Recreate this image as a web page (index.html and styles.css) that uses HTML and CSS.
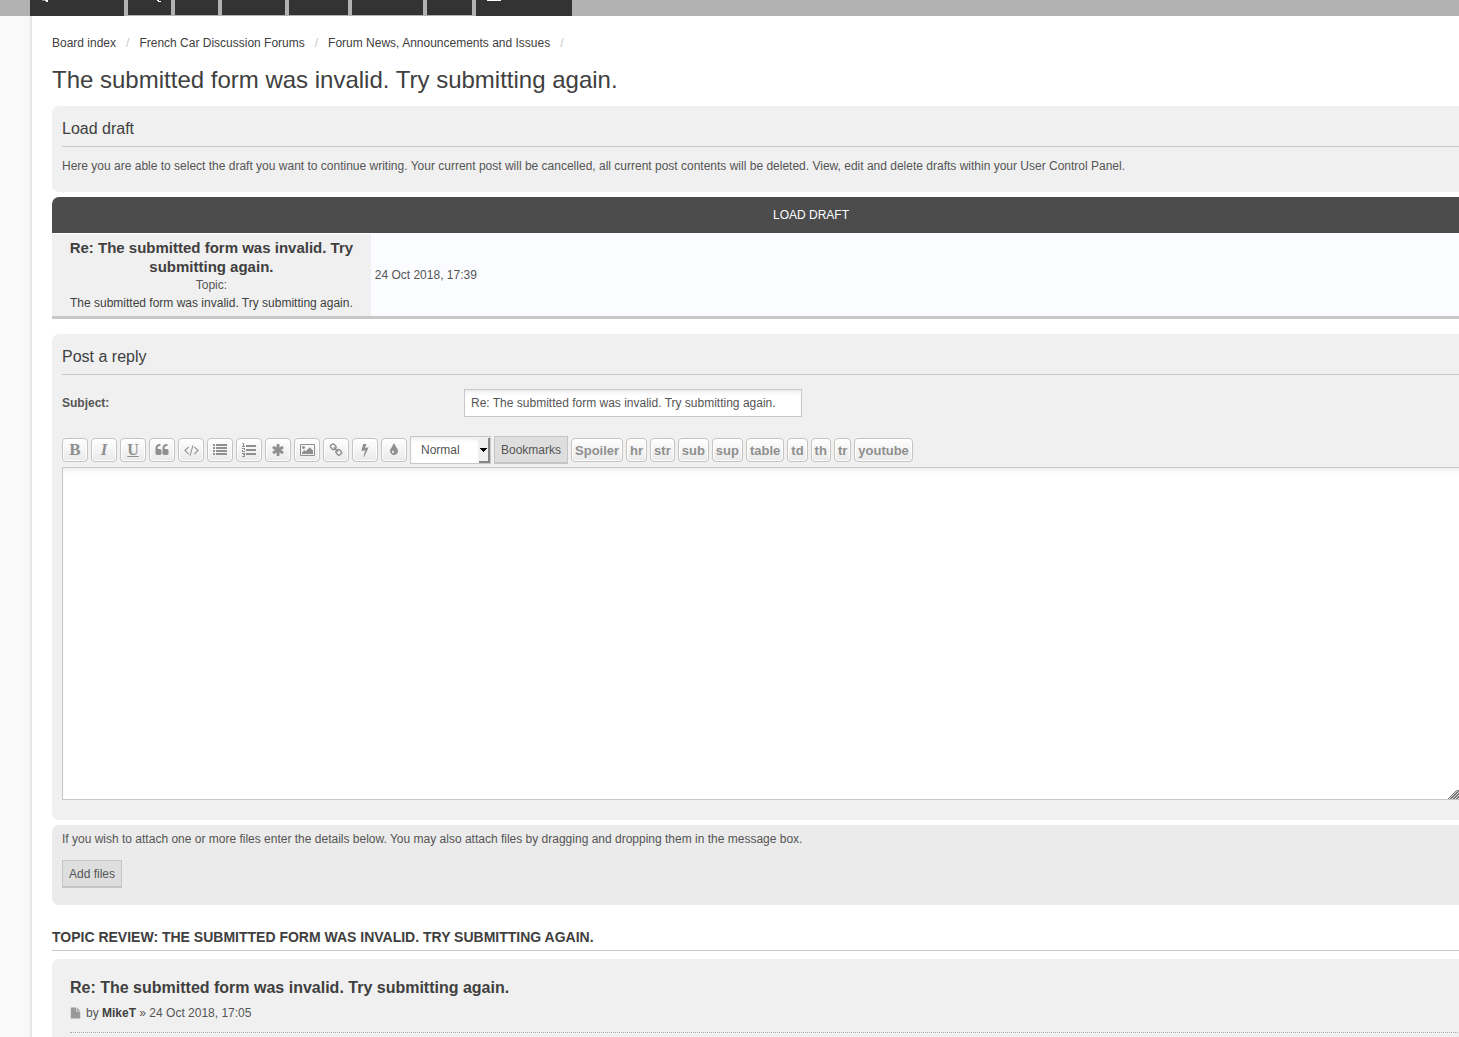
FILE: index.html
```html
<!DOCTYPE html>
<html lang="en">
<head>
  <meta charset="UTF-8">
  <title>Post a reply</title>
  <link rel="stylesheet" href="styles.css">
</head>
<body>
  <!-- Top navigation -->
  <nav class="navbar">
    <ul class="tabs">
      <li class="tab-full"><svg width="8" height="2" viewBox="0 0 8 2"><path fill="#7d8b99" d="M1 0h3v1H1z"/><path d="M4 0h3v2H5V1H4z"/></svg></li>
      <li><svg class="icon-search" width="4" height="2" viewBox="0 0 4 2"><path d="M0 0h2v1H0zM1 1h3v1H1z"/></svg></li>
      <li></li>
      <li></li>
      <li></li>
      <li></li>
      <li></li>
      <li class="tab-full"><svg width="14" height="1" viewBox="0 0 14 1"><path d="M0 0h14v1H0z"/></svg></li>
    </ul>
  </nav>

  <div class="wrap">
    <ul class="breadcrumbs">
      <li><a href="#">Board index</a></li>
      <li><a href="#">French Car Discussion Forums</a></li>
      <li><a href="#">Forum News, Announcements and Issues</a></li>
    </ul>

    <h2 class="topic-title"><a href="#">The submitted form was invalid. Try submitting again.</a></h2>

    <!-- Drafts -->
    <section class="panel panel-draft">
      <h3>Load draft</h3>
      <p>Here you are able to select the draft you want to continue writing. Your current post will be cancelled, all current post contents will be deleted. View, edit and delete drafts within your User Control Panel.</p>
    </section>

    <table class="drafts">
      <colgroup>
        <col class="col-topic">
        <col>
      </colgroup>
      <thead>
        <tr><th colspan="2">Load draft</th></tr>
      </thead>
      <tbody>
        <tr>
          <td class="draft-topic">
            <a class="draft-title" href="#">Re: The submitted form was invalid. Try submitting again.</a>
            <span>Topic:</span>
            <a href="#">The submitted form was invalid. Try submitting again.</a>
          </td>
          <td class="draft-date">24 Oct 2018, 17:39</td>
        </tr>
      </tbody>
    </table>

    <!-- Editor -->
    <form>
      <section class="panel panel-post">
        <h3>Post a reply</h3>
        <div class="field">
          <label for="subject">Subject:</label>
          <input type="text" id="subject" class="inputbox" value="Re: The submitted form was invalid. Try submitting again.">
        </div>

        <div class="format-buttons">
          <button type="button" class="bb bb-icon bb-letter">B</button>
          <button type="button" class="bb bb-icon bb-letter bb-italic">I</button>
          <button type="button" class="bb bb-icon bb-letter bb-underline">U</button>
          <button type="button" class="bb bb-icon" aria-label="Quote"><svg width="14" height="14" viewBox="0 0 1792 1792"><path d="M832 960v384q0 80-56 136t-136 56h-384q-80 0-136-56t-56-136v-704q0-104 40.5-198.5t109.5-163.5 163.5-109.5 198.5-40.5h64q26 0 45 19t19 45v128q0 26-19 45t-45 19h-64q-106 0-181 75t-75 181v32q0 40 28 68t68 28h224q80 0 136 56t56 136zm896 0v384q0 80-56 136t-136 56h-384q-80 0-136-56t-56-136v-704q0-104 40.5-198.5t109.5-163.5 163.5-109.5 198.5-40.5h64q26 0 45 19t19 45v128q0 26-19 45t-45 19h-64q-106 0-181 75t-75 181v32q0 40 28 68t68 28h224q80 0 136 56t56 136z"/></svg></button>
          <button type="button" class="bb bb-icon" aria-label="Code"><svg width="15" height="14" viewBox="-64 0 1920 1792"><path d="M553 1399l-50 50q-10 10-23 10t-23-10l-466-466q-10-10-10-23t10-23l466-466q10-10 23-10t23 10l50 50q10 10 10 23t-10 23l-393 393 393 393q10 10 10 23t-10 23zm591-1067l-373 1291q-4 13-15.5 19.5t-23.5 2.5l-62-17q-13-4-19.5-15.5t-2.5-24.5l373-1291q4-13 15.5-19.5t23.5-2.5l62 17q13 4 19.5 15.5t2.5 24.5zm657 651l-466 466q-10 10-23 10t-23-10l-50-50q-10-10-10-23t10-23l393-393-393-393q-10-10-10-23t10-23l50-50q10-10 23-10t23 10l466 466q10 10 10 23t-10 23z"/></svg></button>
          <button type="button" class="bb bb-icon" aria-label="List"><svg width="14" height="14" viewBox="0 0 14 14"><path d="M0 1h2v2H0zM3 1h11v2H3zM0 4h2v2H0zM3 4h11v2H3zM0 7h2v2H0zM3 7h11v2H3zM0 10h2v2H0zM3 10h11v2H3z"/></svg></button>
          <button type="button" class="bb bb-icon" aria-label="Ordered list"><svg width="14" height="14" viewBox="0 0 14 14"><path d="M4 2h10v2H4zM4 6h10v2H4zM4 10h10v2H4zM1 0h1v3h1v1H0V3h1V1H0zM0 5h3v2H1v1h2v1H0V7h2V6H0zM0 10h3v4H0v-1h2v-1H1v-1H0z"/></svg></button>
          <button type="button" class="bb bb-icon" aria-label="List item"><svg width="14" height="14" viewBox="0 0 1792 1792"><path d="M1546 1050q46 26 59.5 77.5t-12.5 97.5l-64 110q-26 46-77.5 59.5t-97.5-12.5l-266-153v307q0 52-38 90t-90 38h-128q-52 0-90-38t-38-90v-307l-266 153q-46 26-97.5 12.5t-77.5-59.5l-64-110q-26-46-12.5-97.5t59.5-77.5l266-154-266-154q-46-26-59.5-77.5t12.5-97.5l64-110q26-46 77.5-59.5t97.5 12.5l266 153v-307q0-52 38-90t90-38h128q52 0 90 38t38 90v307l266-153q46-26 97.5-12.5t77.5 59.5l64 110q26 46 12.5 97.5t-59.5 77.5l-266 154z"/></svg></button>
          <button type="button" class="bb bb-icon" aria-label="Image"><svg width="15" height="14" viewBox="-64 0 1920 1792"><path d="M576 576q0 80-56 136t-136 56-136-56-56-136 56-136 136-56 136 56 56 136zm1024 384v448h-1408v-192l320-320 160 160 512-512zm96-704h-1600q-13 0-22.5 9.5t-9.5 22.5v1216q0 13 9.5 22.5t22.5 9.5h1600q13 0 22.5-9.5t9.5-22.5v-1216q0-13-9.5-22.5t-22.5-9.5zm160 32v1216q0 66-47 113t-113 47h-1600q-66 0-113-47t-47-113v-1216q0-66 47-113t113-47h1600q66 0 113 47t47 113z"/></svg></button>
          <button type="button" class="bb bb-icon" aria-label="Link"><svg width="14" height="14" viewBox="0 0 1792 1792"><path d="M1520 1216q0-40-28-68l-208-208q-28-28-68-28-42 0-72 32 3 3 19 18.5t21.5 21.5 15 19 13 25.5 3.5 27.5q0 40-28 68t-68 28q-15 0-27.5-3.5t-25.5-13-19-15-21.5-21.5-18.5-19q-33 31-33 73 0 40 28 68l206 207q27 27 68 27 40 0 68-26l147-146q28-28 28-67zm-703-705q0-40-28-68l-206-207q-28-28-68-28-39 0-68 27l-147 146q-28 28-28 67 0 40 28 68l208 208q27 27 68 27 42 0 72-31-3-3-19-18.5t-21.5-21.5-15-19-13-25.5-3.5-27.5q0-40 28-68t68-28q15 0 27.5 3.5t25.5 13 19 15 21.5 21.5 18.5 19q33-31 33-73zm895 705q0 120-85 203l-147 146q-83 83-203 83-121 0-204-85l-206-207q-83-83-83-203 0-123 88-209l-88-88q-86 88-208 88-120 0-204-84l-208-208q-84-84-84-204t85-203l147-146q83-83 203-83 121 0 204 85l206 207q83 83 83 203 0 123-88 209l88 88q86-88 208-88 120 0 204 84l208 208q84 84 84 204z"/></svg></button>
          <button type="button" class="bb bb-icon" aria-label="Flash"><svg width="14" height="14" viewBox="0 0 1792 1792"><path d="M1333 566q18 20 7 44l-540 1157q-13 25-42 25-4 0-14-2-17-5-25.5-19t-4.5-30l197-808-406 101q-4 1-12 1-18 0-31-11-18-15-13-39l201-825q4-14 16-23t28-9h328q19 0 32 12.5t13 29.5q0 8-5 18l-171 463 396-98q8-2 12-2 19 0 34 15z"/></svg></button>
          <button type="button" class="bb bb-icon" aria-label="Font colour"><svg width="14" height="14" viewBox="0 0 1792 1792"><path d="M896 1152q0-36-20-69-1-1-15.5-22.5t-25.5-38-25-44-21-50.5q-4-16-21-16t-21 16q-7 23-21 50.5t-25 44-25.5 38-15.5 22.5q-20 33-20 69 0 53 37.5 90.5t90.5 37.5 90.5-37.5 37.5-90.5zm512-128q0 212-150 362t-362 150-362-150-150-362q0-145 81-275 6-9 62.5-90.5t101-151 99.5-178 83-201.5q9-30 34-47t51-17 51.5 17 33.5 47q28 93 83 201.5t99.5 178 101 151 62.5 90.5q81 127 81 275z"/></svg></button>
          <span class="font-size">
            <select aria-label="Font size"><option>Normal</option></select>
            <svg class="select-arrow" width="12" height="26" viewBox="0 0 12 26"><path fill="#efefef" d="M0 1h12v24H0z"/><path fill="#868686" d="M10 1h2v25H1v-2h9z"/><path fill="#000" d="M2 11h7v1H8v1H7v1H6v1H5v-1H4v-1H3v-1H2z"/></svg>
          </span>
          <button type="button" class="button">Bookmarks</button>
          <button type="button" class="bb">Spoiler</button>
          <button type="button" class="bb">hr</button>
          <button type="button" class="bb">str</button>
          <button type="button" class="bb">sub</button>
          <button type="button" class="bb">sup</button>
          <button type="button" class="bb">table</button>
          <button type="button" class="bb">td</button>
          <button type="button" class="bb">th</button>
          <button type="button" class="bb">tr</button>
          <button type="button" class="bb">youtube</button>
        </div>
        <textarea class="message" rows="15" aria-label="Message"></textarea>
      </section>

      <section class="panel panel-attach">
        <p>If you wish to attach one or more files enter the details below. You may also attach files by dragging and dropping them in the message box.</p>
        <button type="button" class="button">Add files</button>
      </section>
    </form>

    <!-- Topic review -->
    <h3 class="review-title">Topic review: The submitted form was invalid. Try submitting again.</h3>
    <article class="post">
      <h3><a href="#">Re: The submitted form was invalid. Try submitting again.</a></h3>
      <p class="author">
        <svg width="11" height="12" viewBox="0 0 1792 1792"><path d="M1152 512v-472q22 14 36 28l408 408q14 14 28 36h-472zm-128 32q0 40 28 68t68 28h544v1056q0 40-28 68t-68 28h-1344q-40 0-68-28t-28-68v-1600q0-40 28-68t68-28h800v544z"/></svg>
        <span>by <a href="#"><strong>MikeT</strong></a> » 24 Oct 2018, 17:05</span>
      </p>
      <div class="content"></div>
    </article>
  </div>
</body>
</html>
```
FILE: styles.css
```css
:root {
  --text: #555;
  --dark: #404040;
  --panel: #f0f0f0;
  --line: #c8c8c8;
  --icon: #8f8f8f;
}
* { box-sizing: border-box; }
html { overflow-x: hidden; }
body {
  margin: 0;
  overflow-x: hidden;
  background: #f9f9f9;
  color: var(--text);
  font-family: Arial, "Liberation Sans", sans-serif;
  font-size: 12px;
  line-height: 18px;
}
h2, h3, p, ul { margin: 0; padding: 0; font-weight: normal; }
ul { list-style: none; }
a { color: var(--dark); text-decoration: none; }
a:hover { text-decoration: underline; }
button, input, select, textarea { font-family: inherit; font-size: 12px; color: var(--text); }
svg { display: block; }

/* Navigation */
.navbar { background: #b2b2b2; padding-left: 30px; }
.tabs {
  display: grid;
  grid-template-columns: 94px 43px 43px 63px 59px 71px 45px 96px;
  gap: 4px;
  height: 16px;
}
.tabs li { background: #333; margin-bottom: 1px; padding-left: 11px; }
.tabs .tab-full { margin-bottom: 0; }
.tabs svg { fill: #fff; }
.tabs .icon-search { margin-left: 18px; }

/* Page, wider than the window */
.wrap {
  margin: 0 -133px 0 30px;
  padding: 18px 20px 0;
  background: #fff;
  border: solid #e6e6e6;
  border-width: 0 2px;
}
.breadcrumbs { display: flex; }
.breadcrumbs li::after { content: "/"; color: #c8c8c8; padding: 0 10px; }
.topic-title { margin: 14px 0 12px; font-size: 24px; line-height: 28px; }

/* Panels */
.panel { background: var(--panel); border-radius: 7px; padding: 10px; }
.panel h3 {
  padding: 3px 0 7px;
  border-bottom: 1px solid var(--line);
  color: var(--dark);
  font-size: 16px;
  line-height: 20px;
}
.panel-draft { padding-bottom: 17px; margin-bottom: 5px; }
.panel-draft p { padding-top: 10px; }

/* Drafts table */
.drafts {
  width: 100%;
  table-layout: fixed;
  border-collapse: separate;
  border-spacing: 0;
  border-bottom: 3px solid var(--line);
  margin-bottom: 15px;
}
.drafts .col-topic { width: 21%; }
.drafts th {
  height: 36px;
  padding: 0;
  background: #4c4c4c;
  border-radius: 7px 7px 0 0;
  color: #fff;
  font-weight: normal;
  text-transform: uppercase;
}
.drafts td { padding: 4px; border-top: 1px solid #fff; }
.drafts .draft-topic { background: var(--panel); text-align: center; }
.draft-topic a, .draft-topic span { display: block; }
.draft-topic .draft-title { font-size: 15px; line-height: 19px; font-weight: bold; }
.drafts .draft-date { background: #fbfcff; }

/* Post editor */
.panel-post { padding-bottom: 20px; margin-bottom: 5px; }
.field {
  display: grid;
  grid-template-columns: 402px 338px;
  align-items: center;
  padding: 14px 0 19px;
}
.field label { font-weight: bold; }
.inputbox, .message {
  background: #fff;
  border: 1px solid var(--line);
  box-shadow: inset 0 4px 5px -2px #e9e9e9;
}
.inputbox { height: 28px; padding: 0 6px; }
.format-buttons { display: flex; align-items: center; gap: 3px; margin-bottom: 3px; }
.bb {
  display: flex;
  align-items: center;
  justify-content: center;
  height: 24px;
  padding: 0 3px;
  background: linear-gradient(#fff, #e9e9e9);
  border: 1px solid #c7c3bf;
  border-radius: 4px;
  box-shadow: inset 0 0 0 1px #fff;
  color: var(--icon);
  font-size: 13px;
  font-weight: bold;
}
.bb-icon { width: 26px; padding: 0; }
.bb svg { fill: var(--icon); }
.bb-letter { font-family: "Liberation Serif", serif; font-size: 17px; line-height: 18px; }
.bb-italic { font-style: italic; }
.bb-underline { font-size: 16px; text-decoration: underline; }
.font-size { position: relative; }
.font-size select {
  display: block;
  width: 81px;
  height: 28px;
  padding: 0 10px;
  appearance: none;
  background: #fff;
  border: 1px solid var(--line);
  border-radius: 0;
  box-shadow: inset 0 4px 5px -2px #e9e9e9;
}
.select-arrow { position: absolute; top: 1px; right: 1px; pointer-events: none; }
.button {
  height: 28px;
  padding: 0 6px;
  background: #dedede;
  border: 1px solid #c5c5c5;
  border-bottom-width: 2px;
}
.message { display: block; width: 1402px; height: 333px; resize: both; }
.message::-webkit-resizer {
  background:
    linear-gradient(135deg, #fff 50%, transparent 50%),
    repeating-linear-gradient(135deg, #777 0 1px, #ddd 1px 2px);
}

/* Attachments */
.panel-attach { padding: 5px 10px 17px; background: #ebebeb; }
.panel-attach p { margin-bottom: 12px; }

/* Topic review */
.review-title {
  margin: 23px 0 8px;
  padding-bottom: 4px;
  border-bottom: 1px solid var(--line);
  color: var(--dark);
  font-size: 14px;
  line-height: 18px;
  font-weight: bold;
  text-transform: uppercase;
}
.post { padding: 19px 18px 0; background: var(--panel); border-radius: 7px 7px 0 0; }
.post h3 { font-size: 16px; line-height: 20px; font-weight: bold; }
.author { display: flex; align-items: center; gap: 5px; margin: 6px 0 10px; }
.author svg { fill: #999; }
.content { height: 5px; border-top: 1px dotted #aaa; }
```
